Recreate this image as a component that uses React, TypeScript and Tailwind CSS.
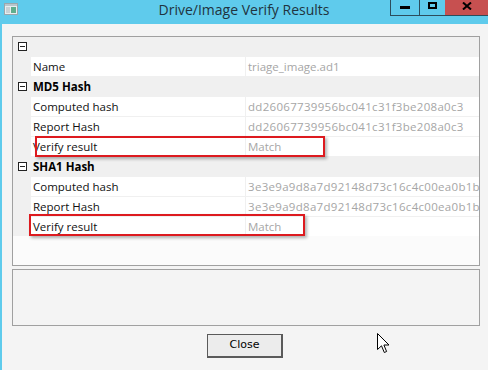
import React from "react"

type Row =
  | { kind: "cat"; label: string }
  | { kind: "prop"; label: string; value: string; hash?: boolean }

const rows: Row[] = [
  { kind: "prop", label: "Name", value: "triage_image.ad1" },
  { kind: "cat", label: "MD5 Hash" },
  { kind: "prop", label: "Computed hash", value: "dd26067739956bc041c31f3be208a0c3", hash: true },
  { kind: "prop", label: "Report Hash", value: "dd26067739956bc041c31f3be208a0c3", hash: true },
  { kind: "prop", label: "Verify result", value: "Match" },
  { kind: "cat", label: "SHA1 Hash" },
  { kind: "prop", label: "Computed hash", value: "3e3e9a9d8a7d92148d73c16c4c00ea0b1b9e27c", hash: true },
  { kind: "prop", label: "Report Hash", value: "3e3e9a9d8a7d92148d73c16c4c00ea0b1b9e27c", hash: true },
  { kind: "prop", label: "Verify result", value: "Match" },
]

function Collapse() {
  return (
    <div className="flex h-[9px] w-[9px] items-center justify-center border border-[#222] bg-white">
      <div className="h-px w-[5px] bg-[#222]" />
    </div>
  )
}

function AppIcon() {
  return (
    <svg width="14" height="12" viewBox="0 0 14 12">
      <rect x="0.5" y="0.5" width="13" height="11" fill="#e8eef0" stroke="#9aa7ad" />
      <rect x="1" y="1" width="12" height="2" fill="#b9c6cc" />
      <rect x="2" y="4" width="4" height="6" fill="#c9d2d6" />
      <rect x="7" y="4" width="5" height="6" fill="#5fae8e" />
    </svg>
  )
}

function CloseX() {
  return (
    <svg width="10" height="8" viewBox="0 0 10 8">
      <path d="M1 0.5 L9 7.5 M9 0.5 L1 7.5" stroke="#000" strokeWidth="2" />
    </svg>
  )
}

function Cursor() {
  return (
    <svg width="13" height="21" viewBox="0 0 13 21" className="absolute left-[375px] top-[333px]">
      <path
        d="M0.5 0.5 L0.5 16.5 L4.5 12.8 L7.3 19.5 L9.6 18.5 L6.9 12 L12 12 Z"
        fill="#fff"
        stroke="#000"
        strokeWidth="1"
        strokeLinejoin="miter"
      />
    </svg>
  )
}

export default function App() {
  return (
    <div className="relative flex h-[370px] w-[488px] flex-col overflow-hidden border-l-2 border-[#5fcbec] bg-[#f4f4f4] font-['Open_Sans',sans-serif]">
      {/* title bar */}
      <div className="-ml-[2px] grid h-[24px] w-[488px] shrink-0 grid-cols-[98px_1fr_98px] bg-[#5fcbec]">
        <div className="flex items-start pl-[4px] pt-[3px]">
          <AppIcon />
        </div>
        <div className="pt-[1px] text-center text-[14px] leading-[18px] text-[#1f3440]">
          Drive/Image Verify Results
        </div>
        <div className="flex h-[16px] border-b border-l border-[#2c4d5c]">
          <div className="flex w-[28px] items-start justify-center pt-[6px]">
            <div className="h-[3px] w-[10px] bg-black" />
          </div>
          <div className="flex w-[26px] justify-center border-l border-[#2c4d5c] pt-[2px]">
            <div className="h-[7px] w-[9px] border-2 border-black" />
          </div>
          <div className="flex flex-1 justify-center bg-[#c75050] pt-[2px]">
            <CloseX />
          </div>
        </div>
      </div>

      {/* content */}
      <div className="flex flex-col pl-[10px] pt-[12px]">
        <div className="flex h-[230px] w-[468px] flex-col overflow-hidden border border-[#a0a0a0] bg-[#fbfbfb] text-[11.5px] leading-[19px]">
          <div className="flex h-[19px] bg-[#f0f0f0]">
            <div className="flex w-[18px] items-center justify-center">
              <Collapse />
            </div>
          </div>
          {rows.map((r, i) =>
            r.kind === "cat" ? (
              <div key={i} className="flex h-[20px] bg-[#f0f0f0]">
                <div className="flex w-[18px] items-center justify-center">
                  <Collapse />
                </div>
                <div className="pl-[2px] pt-px font-bold text-black">{r.label}</div>
              </div>
            ) : (
              <div key={i} className="flex h-[20px]">
                <div className="w-[18px] shrink-0 bg-[#f0f0f0]" />
                <div className="w-[214px] shrink-0 border-t border-[#f0f0f0] bg-white pl-[2px] text-[#111]">
                  {r.label}
                </div>
                <div
                  className={`min-w-0 flex-1 overflow-hidden whitespace-nowrap border-t border-l border-[#f0f0f0] bg-white pl-[2px] text-[#a6a6a6] ${
                    r.hash ? "tracking-[0.3px]" : ""
                  }`}
                >
                  {r.value}
                </div>
              </div>
            )
          )}
        </div>

        <div className="mt-[3px] h-[57px] w-[468px] border border-[#a0a0a0] bg-[#f4f4f4]" />

        <div className="mt-[8px] flex justify-center pr-[10px]">
          <button className="h-[24px] w-[76px] border border-b-2 border-r-2 border-[#5a5a5a] bg-[#ececec] font-['DejaVu_Sans',sans-serif] text-[11px] text-black">
            Close
          </button>
        </div>
      </div>

      {/* annotation boxes */}
      <div className="absolute left-[33px] top-[136px] h-[21px] w-[290px] border-2 border-[#dd1a1f] shadow-[2px_2px_3px_rgba(0,0,0,0.3)]" />
      <div className="absolute left-[27px] top-[214px] h-[22px] w-[276px] border-2 border-[#dd1a1f] shadow-[2px_2px_3px_rgba(0,0,0,0.3)]" />

      <Cursor />
    </div>
  )
}
